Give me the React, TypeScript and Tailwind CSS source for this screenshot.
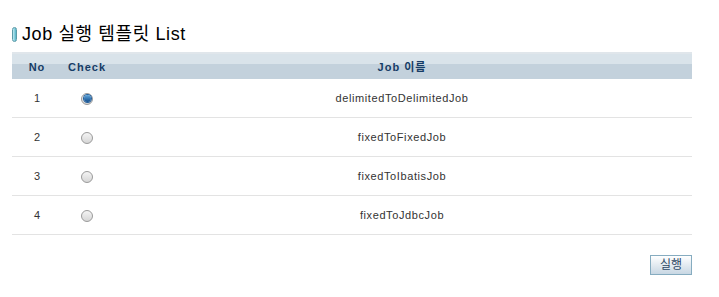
import React, { useState } from "react";

const jobs = [
  "delimitedToDelimitedJob",
  "fixedToFixedJob",
  "fixedToIbatisJob",
  "fixedToJdbcJob",
];

const Radio = ({ checked, onClick }: { checked: boolean; onClick: () => void }) => (
  <span
    onClick={onClick}
    className="inline-flex h-[12px] w-[12px] cursor-pointer items-center justify-center rounded-full border border-[#9a9a9a] bg-gradient-to-b from-[#f4f4f4] to-[#d6d6d6]"
  >
    {checked && (
      <span className="h-[7px] w-[7px] rounded-full bg-gradient-to-b from-[#5fa6dc] to-[#0d4c8c] ring-1 ring-[#24609c]" />
    )}
  </span>
);

const App = () => {
  const [selected, setSelected] = useState(0);
  return (
    <div className="h-[297px] w-[719px] bg-white font-['Liberation_Sans','Noto_Sans_CJK_KR',sans-serif]">
      {/* Title */}
      <div className="flex items-center pl-[12px] pt-[24px]">
        <span className="h-[15px] w-[5px] rounded-full border border-[#5a9aa8] bg-gradient-to-r from-[#bfeaf2] to-[#4fb4c8]" />
        <h2 className="ml-[5px] text-[18px] leading-[20px] tracking-[0.6px] text-black">Job 실행 템플릿 List</h2>
      </div>

      {/* Table */}
      <div className="ml-[12px] mt-[8px] w-[680px] text-[11px]">
        <div className="flex h-[27px] items-center border-t-2 border-[#e0e6eb] bg-[linear-gradient(to_bottom,#d9e3ea_0,#d9e3ea_40%,#c3d1dc_40%,#c3d1dc_100%)] pt-[1px] font-bold tracking-[1px] text-[#163c66]">
          <div className="w-[50px] text-center">No</div>
          <div className="w-[50px] text-center">Check</div>
          <div className="flex-1 text-center">Job 이름</div>
        </div>
        {jobs.map((job, i) => (
          <div key={job} className="flex h-[39px] items-center border-b border-[#e3e3e3] pt-[1px] text-[#333]">
            <div className="w-[50px] text-center">{i + 1}</div>
            <div className="flex w-[50px] justify-center">
              <Radio checked={selected === i} onClick={() => setSelected(i)} />
            </div>
            <div className="flex-1 text-center tracking-[0.6px]">{job}</div>
          </div>
        ))}
      </div>

      {/* Button */}
      <div className="flex w-[692px] justify-end pt-[20px]">
        <button className="h-[20px] w-[42px] border border-[#86acc0] bg-gradient-to-b from-white to-[#c8d7e3] text-[12px] leading-none text-[#2c4764]">
          실행
        </button>
      </div>
    </div>
  );
};

export default App;
